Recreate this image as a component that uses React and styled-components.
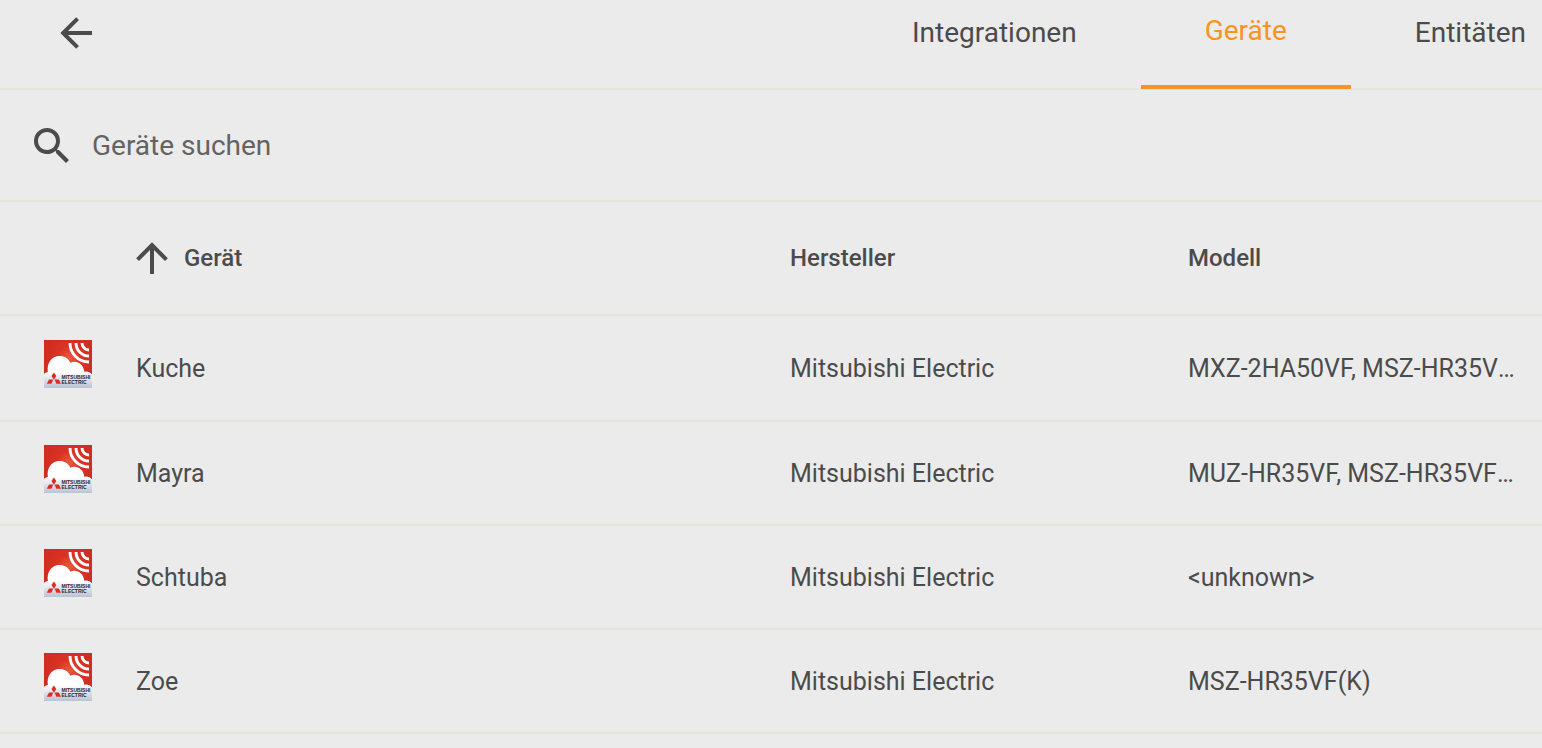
import { useState } from "react";
import styled, { createGlobalStyle, ThemeProvider } from "styled-components";

const theme = {
  colors: {
    background: "#ebebeb",
    divider: "#e8e4d9",
    text: "#4b4b4b",
    secondary: "#636363",
    accent: "#f89422",
  },
};

const GlobalStyle = createGlobalStyle`
  * {
    box-sizing: border-box;
  }

  body {
    background: ${(props) => props.theme.colors.background};
    color: ${(props) => props.theme.colors.text};
    font-family: Roboto, "Noto Sans", sans-serif;
    margin: 0;
    overflow-x: hidden;
  }
`;

const Toolbar = styled.header`
  border-bottom: 2px solid ${(props) => props.theme.colors.divider};
  display: flex;
  height: 90px;
  justify-content: space-between;
`;

const BackButton = styled.button`
  align-items: center;
  background: none;
  border: 0;
  color: inherit;
  cursor: pointer;
  display: flex;
  height: 66px;
  margin-left: 52px;
  padding: 0;
`;

const Tabs = styled.nav`
  display: flex;
  height: 89px;
`;

const Tab = styled.a`
  align-items: center;
  border-bottom: ${(props) =>
    props.$active ? `4px solid ${props.theme.colors.accent}` : "0"};
  color: ${(props) =>
    props.$active ? props.theme.colors.accent : props.theme.colors.text};
  display: flex;
  font-size: 28px;
  line-height: 32px;
  padding: 0 64px 23px;
  text-decoration: none;

  &:last-child {
    padding-right: 16px;
  }
`;

const SearchBar = styled.label`
  align-items: center;
  border-bottom: 2px solid ${(props) => props.theme.colors.divider};
  display: flex;
  gap: 16px;
  height: 112px;
  padding: 2px 28px 0;
`;

const SearchInput = styled.input`
  background: none;
  border: 0;
  color: inherit;
  flex: 1;
  font-family: inherit;
  font-size: 28px;
  line-height: 32px;
  min-width: 0;
  outline: none;
  padding: 0;

  &::placeholder {
    color: ${(props) => props.theme.colors.secondary};
    opacity: 1;
  }
`;

const Table = styled.table`
  border-collapse: separate;
  border-spacing: 0;
  table-layout: fixed;
  width: 100%;
`;

const Column = styled.col`
  width: ${(props) => props.$width};
`;

const HeadCell = styled.th`
  border-bottom: 2px solid ${(props) => props.theme.colors.divider};
  font-size: 24px;
  font-weight: 500;
  height: 114px;
  line-height: 32px;
  padding: 0 20px 0 32px;
  text-align: left;
`;

const SortButton = styled.button`
  align-items: center;
  background: none;
  border: 0;
  color: inherit;
  cursor: pointer;
  display: flex;
  font: inherit;
  gap: 8px;
  margin-left: -8px;
  padding: 0;
`;

const Cell = styled.td`
  border-bottom: 2px solid ${(props) => props.theme.colors.divider};
  font-size: 25px;
  height: 104px;
  line-height: 32px;
  overflow: hidden;
  padding: 2px 20px 0 32px;
  text-overflow: ellipsis;
  white-space: nowrap;

  tr:first-child > & {
    height: 106px;
  }
`;

const IconCell = styled(Cell)`
  padding: 0 0 8px 44px;
`;

const Icon = styled.svg`
  display: block;
  fill: currentColor;
  height: ${(props) => props.$size}px;
  width: ${(props) => props.$size}px;
`;

const BrandText = styled.text`
  fill: #2b2426;
  font-family: "Liberation Sans", sans-serif;
  font-size: 5px;
  font-weight: 700;
`;

const tabs = [
  { label: "Integrationen", href: "#integrations" },
  { label: "Geräte", href: "#devices" },
  { label: "Entitäten", href: "#entities" },
];

const devices = [
  {
    name: "Kuche",
    manufacturer: "Mitsubishi Electric",
    model: "MXZ-2HA50VF, MSZ-HR35VF(K)",
  },
  {
    name: "Mayra",
    manufacturer: "Mitsubishi Electric",
    model: "MUZ-HR35VF, MSZ-HR35VF(K)",
  },
  {
    name: "Schtuba",
    manufacturer: "Mitsubishi Electric",
    model: "<unknown>",
  },
  {
    name: "Zoe",
    manufacturer: "Mitsubishi Electric",
    model: "MSZ-HR35VF(K)",
  },
];

const ArrowLeft = () => (
  <Icon $size={48} viewBox="0 0 24 24" aria-hidden="true">
    <path d="M20,11V13H8L13.5,18.5L12.08,19.92L4.16,12L12.08,4.08L13.5,5.5L8,11H20Z" />
  </Icon>
);

const ArrowUp = () => (
  <Icon $size={48} viewBox="0 0 24 24" aria-hidden="true">
    <path d="M13,20H11V8L5.5,13.5L4.08,12.08L12,4.16L19.92,12.08L18.5,13.5L13,8V20Z" />
  </Icon>
);

const Magnify = () => (
  <Icon $size={48} viewBox="0 0 24 24" aria-hidden="true">
    <path d="M9.5,3A6.5,6.5 0 0,1 16,9.5C16,11.11 15.41,12.59 14.44,13.73L14.71,14H15.5L20.5,19L19,20.5L14,15.5V14.71L13.73,14.44C12.59,15.41 11.11,16 9.5,16A6.5,6.5 0 0,1 3,9.5A6.5,6.5 0 0,1 9.5,3M9.5,5C7,5 5,7 5,9.5C5,12 7,14 9.5,14C12,14 14,12 14,9.5C14,7 12,5 9.5,5Z" />
  </Icon>
);

const MelCloudIcon = ({ id }) => (
  <Icon $size={48} viewBox="0 0 48 48" aria-hidden="true">
    <defs>
      <radialGradient id={`sky-${id}`} cx="52%" cy="38%" r="50%">
        <stop offset="0" stopColor="#ea5a40" />
        <stop offset="0.5" stopColor="#d93323" />
        <stop offset="1" stopColor="#cf2d22" />
      </radialGradient>
      <linearGradient
        id={`cloud-${id}`}
        gradientUnits="userSpaceOnUse"
        x1="0"
        y1="32"
        x2="0"
        y2="48"
      >
        <stop offset="0" stopColor="#ffffff" />
        <stop offset="1" stopColor="#b8c3d3" />
      </linearGradient>
    </defs>
    <rect width="48" height="48" fill={`url(#sky-${id})`} />
    <path
      fill={`url(#cloud-${id})`}
      d="M0 48V34C1 33 2.200 32.300 3.800 32C2.600 23 7.500 16 15.500 16C20.500 16 24.500 18.700 26.400 22.800C32.500 19.800 39.500 24 40.200 31.700C43.500 31.300 46.500 32.300 48 34.500V48Z"
    />
    <g fill="none" stroke="#ffffff" strokeWidth="2.900">
      <path d="M26 3A19 19 0 0 0 45 22" />
      <path d="M32 3A13 13 0 0 0 45 16" />
      <path d="M38 3A7 7 0 0 0 45 10" />
    </g>
    <g fill="#df2a24">
      <path d="M9.900 32.500L12.300 36L9.900 39.700L7.500 36Z" />
      <path d="M9.300 39.400L7.400 43.700H2.800L5 39.400Z" />
      <path d="M10.500 39.400L12.400 43.700H17L14.800 39.400Z" />
    </g>
    <BrandText x="17.500" y="39.200">
      MITSUBISHI
    </BrandText>
    <BrandText x="17.500" y="43.700">
      ELECTRIC
    </BrandText>
  </Icon>
);

export default function App() {
  const [search, setSearch] = useState("");
  const [descending, setDescending] = useState(false);

  const rows = devices
    .filter((device) =>
      device.name.toLowerCase().includes(search.toLowerCase())
    )
    .sort((a, b) => a.name.localeCompare(b.name) * (descending ? -1 : 1));

  return (
    <ThemeProvider theme={theme}>
      <GlobalStyle />
      <Toolbar>
        <BackButton type="button" aria-label="Zurück">
          <ArrowLeft />
        </BackButton>
        <Tabs>
          {tabs.map((tab) => (
            <Tab
              key={tab.href}
              href={tab.href}
              $active={tab.href === "#devices"}
            >
              {tab.label}
            </Tab>
          ))}
        </Tabs>
      </Toolbar>
      <main>
        <SearchBar>
          <Magnify />
          <SearchInput
            type="text"
            aria-label="Geräte suchen"
            placeholder="Geräte suchen"
            value={search}
            onChange={(event) => setSearch(event.target.value)}
          />
        </SearchBar>
        <Table>
          <colgroup>
            <Column $width="104px" />
            <Column $width="auto" />
            <Column $width="398px" />
            <Column $width="386px" />
          </colgroup>
          <thead>
            <tr>
              <HeadCell aria-label="Symbol" />
              <HeadCell aria-sort={descending ? "descending" : "ascending"}>
                <SortButton
                  type="button"
                  onClick={() => setDescending(!descending)}
                >
                  <ArrowUp />
                  Gerät
                </SortButton>
              </HeadCell>
              <HeadCell>Hersteller</HeadCell>
              <HeadCell>Modell</HeadCell>
            </tr>
          </thead>
          <tbody>
            {rows.map((device) => (
              <tr key={device.name}>
                <IconCell>
                  <MelCloudIcon id={device.name} />
                </IconCell>
                <Cell>{device.name}</Cell>
                <Cell>{device.manufacturer}</Cell>
                <Cell>{device.model}</Cell>
              </tr>
            ))}
          </tbody>
        </Table>
      </main>
    </ThemeProvider>
  );
}
